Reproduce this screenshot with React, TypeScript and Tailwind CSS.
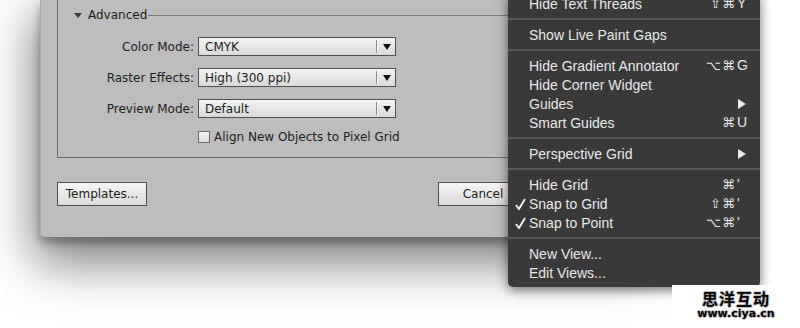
import React from "react";

type MenuItem =
  | { sep: true }
  | { label: string; mods?: string; key?: string; arrow?: boolean; check?: boolean };

const items: MenuItem[] = [
  { label: "Hide Text Threads", mods: "⇧⌘", key: "Y" },
  { sep: true },
  { label: "Show Live Paint Gaps" },
  { sep: true },
  { label: "Hide Gradient Annotator", mods: "⌥⌘", key: "G" },
  { label: "Hide Corner Widget" },
  { label: "Guides", arrow: true },
  { label: "Smart Guides", mods: "⌘", key: "U" },
  { sep: true },
  { label: "Perspective Grid", arrow: true },
  { sep: true },
  { label: "Hide Grid", mods: "⌘", key: "'" },
  { label: "Snap to Grid", mods: "⇧⌘", key: "'", check: true },
  { label: "Snap to Point", mods: "⌥⌘", key: "'", check: true },
  { sep: true },
  { label: "New View..." },
  { label: "Edit Views..." },
];

function Select({ value }: { value: string }) {
  return (
    <div className="w-[198px] h-[19px] border border-[#505050] bg-gradient-to-b from-[#f4f4f4] to-[#d9d9d9] flex items-center">
      <span className="flex-1 pl-[6px] text-[12px] leading-none text-[#1c1c1c]">{value}</span>
      <div className="w-px h-[13px] bg-[#8a8a8a] border-r border-[#fafafa] box-content" />
      <div className="w-[17px] flex items-center justify-center">
        <svg width="8" height="6" viewBox="0 0 8 6">
          <polygon points="0,0 8,0 4,6" fill="#111" />
        </svg>
      </div>
    </div>
  );
}

function Field({ label, value }: { label: string; value: string }) {
  return (
    <div className="flex items-center h-[19px]">
      <span className="w-[140px] pr-[4px] text-right text-[12px] text-[#1c1c1c]">{label}</span>
      <Select value={value} />
    </div>
  );
}

function Button({ children }: { children: React.ReactNode }) {
  return (
    <div className="w-[90px] h-[24px] border border-[#505050] bg-gradient-to-b from-[#f6f6f6] to-[#dadada] flex items-center justify-center text-[12px] text-[#1c1c1c]">
      {children}
    </div>
  );
}

export default function App() {
  return (
    <div className="relative w-[800px] h-[328px] overflow-hidden bg-white font-['DejaVu_Sans',sans-serif]">
      {/* Dialog */}
      <div className="ml-[40px] w-[604px] h-[237px] bg-[#bdbdbd] rounded-b-[5px] border-l border-[#a9a9a9] px-[16px] flex flex-col shadow-[0_6px_10px_rgba(0,0,0,0.3),0_20px_50px_6px_rgba(0,0,0,0.5)]">
        <div className="h-[158px] border-x border-b border-[#6c6c6c] flex flex-col">
          <div className="h-[30px] flex items-center pl-[16px]">
            <svg width="8" height="5" viewBox="0 0 8 5" className="mr-[6px]">
              <polygon points="0,0 8,0 4,5" fill="#3a3a3a" />
            </svg>
            <span className="text-[12px] text-[#1c1c1c]">Advanced</span>
            <div className="flex-1 h-px bg-[#7c7c7c] ml-[1px]" />
          </div>
          <div className="pt-[7px] flex flex-col gap-[12px]">
            <Field label="Color Mode:" value="CMYK" />
            <Field label="Raster Effects:" value="High (300 ppi)" />
            <Field label="Preview Mode:" value="Default" />
            <div className="flex items-center h-[14px]">
              <div className="w-[140px]" />
              <div className="w-[12px] h-[12px] border border-[#6a6a6a] bg-gradient-to-b from-[#f4f4f4] to-[#dcdcdc]" />
              <span className="ml-[4px] text-[12px] text-[#1c1c1c]">Align New Objects to Pixel Grid</span>
            </div>
          </div>
        </div>
        <div className="mt-[24px] flex items-center justify-between">
          <Button>Templates...</Button>
          <div className="flex gap-[10px]">
            <Button>Cancel</Button>
            <Button>OK</Button>
          </div>
        </div>
      </div>

      {/* Menu */}
      <div className="absolute left-[508px] top-[-6px] w-[252px] pb-[5px] rounded-b-[5px] bg-[#393939] shadow-[0_3px_12px_rgba(0,0,0,0.55)] font-['Liberation_Sans','DejaVu_Sans',sans-serif] text-[14px] text-[#e8e8e8]">
        {items.map((it, i) =>
          "sep" in it ? (
            <div key={i} className="h-[12px] flex items-center">
              <div className="w-full h-[2px] bg-[#585858]" />
            </div>
          ) : (
            <div key={i} className="h-[19px] flex items-center">
              <div className="w-[21px] flex justify-end pr-[3px]">
                {it.check && (
                  <svg width="11" height="12" viewBox="0 0 11 12">
                    <path d="M1 7.2 L4 11 L10 1" stroke="#ececec" strokeWidth="2" fill="none" />
                  </svg>
                )}
              </div>
              <span className="flex-1 leading-none">{it.label}</span>
              {it.mods && (
                <div className="flex items-center pr-[11px] font-['DejaVu_Sans',sans-serif]">
                  <span className="text-right text-[13px] tracking-[1px]">{it.mods}</span>
                  <span className="w-[12px] ml-[1px] font-['Liberation_Sans',sans-serif] text-[14px]">{it.key}</span>
                </div>
              )}
              {it.arrow && (
                <svg width="8" height="10" viewBox="0 0 8 10" className="mr-[14px]">
                  <polygon points="0,0 8,5 0,10" fill="#ececec" />
                </svg>
              )}
            </div>
          )
        )}
      </div>

      {/* Watermark */}
      <div className="absolute left-[672px] top-[285px] w-[128px] h-[43px] bg-white flex flex-col items-center pt-[4px]">
        <span className="font-['Noto_Sans_CJK_SC',sans-serif] font-bold text-[16px] leading-[18px] text-black tracking-[1px] [text-shadow:1px_0_0_#bbb,-1px_0_0_#bbb,0_1px_0_#bbb,0_-1px_0_#bbb]">
          思洋互动
        </span>
        <span className="mt-[1px] font-['DejaVu_Sans',sans-serif] font-bold text-[11px] leading-[12px] text-black [text-shadow:1px_0_0_#bbb,-1px_0_0_#bbb,0_1px_0_#bbb,0_-1px_0_#bbb]">
          www.ciya.cn
        </span>
      </div>
    </div>
  );
}
